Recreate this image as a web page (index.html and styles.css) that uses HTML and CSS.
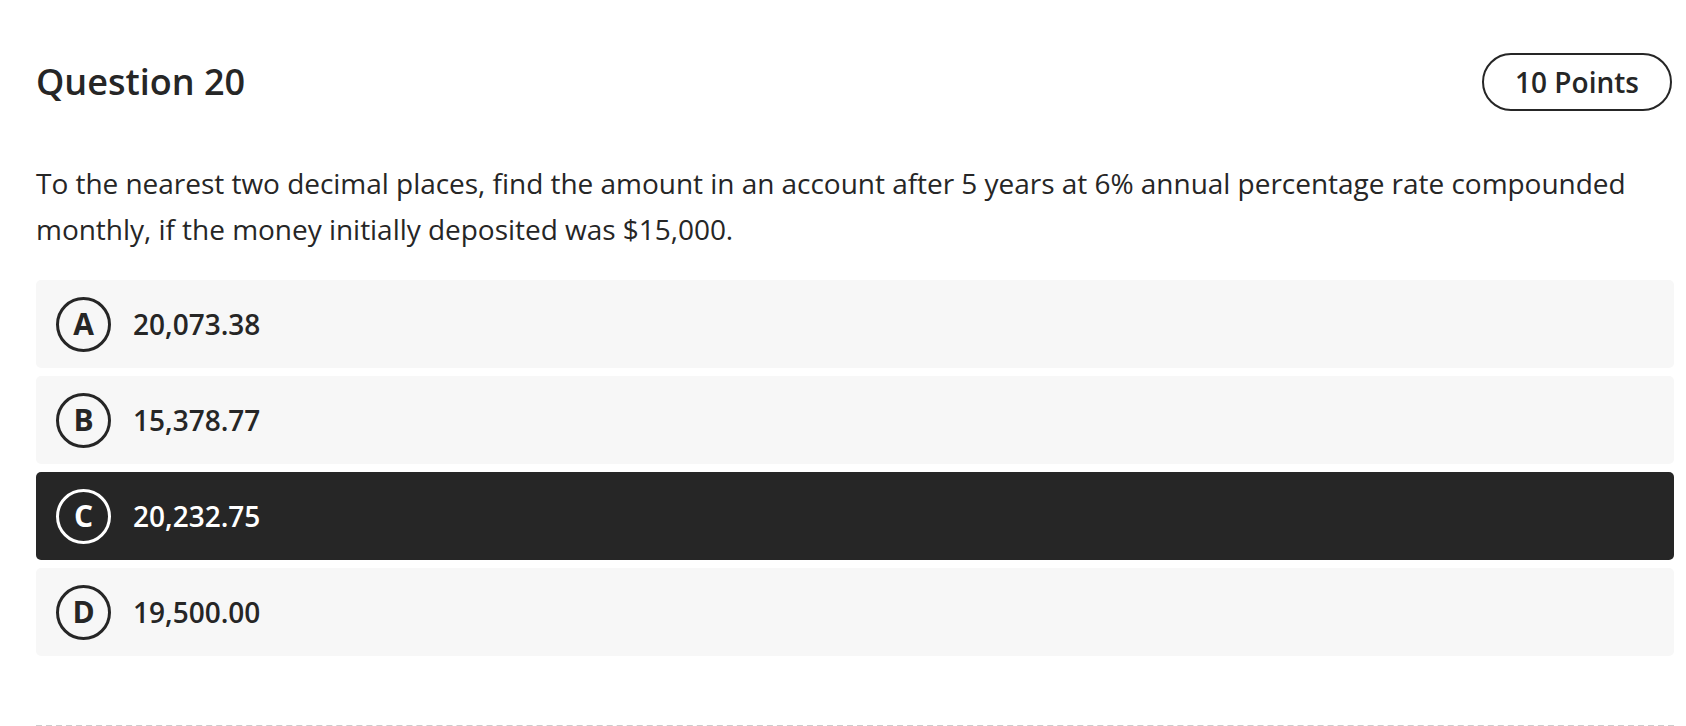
FILE: index.html
```html
<!DOCTYPE html>
<html lang="en">
<head>
<meta charset="utf-8">
<title>Question 20</title>
<link rel="stylesheet" href="styles.css">
</head>
<body>
<main class="question">
  <header class="q-header">
    <h1 class="q-title">Question 20</h1>
    <span class="q-points">10 Points</span>
  </header>
  <p class="q-text">To the nearest two decimal places, find the amount in an account after 5 years at 6% annual percentage rate compounded monthly, if the money initially deposited was $15,000.</p>
  <ul class="options">
    <li class="option"><span class="badge">A</span><span class="opt-text">20,073.38</span></li>
    <li class="option"><span class="badge">B</span><span class="opt-text">15,378.77</span></li>
    <li class="option selected"><span class="badge">C</span><span class="opt-text">20,232.75</span></li>
    <li class="option"><span class="badge">D</span><span class="opt-text">19,500.00</span></li>
  </ul>
  <div class="divider"></div>
</main>
</body>
</html>
```
FILE: styles.css
```css
* { box-sizing: border-box; }
html, body { margin: 0; padding: 0; background: #fff; }
body {
  font-family: "Open Sans", "Noto Sans", sans-serif;
  color: #262626;
  overflow: hidden;
}
.question {
  padding: 53px 12px 0 36px;
}
.q-header {
  display: flex;
  justify-content: space-between;
  align-items: center;
  height: 58px;
}
.q-title {
  margin: 0;
  font-size: 36px;
  font-weight: 600;
  line-height: 42px;
}
.q-points {
  display: flex;
  align-items: center;
  justify-content: center;
  width: 190px;
  height: 58px;
  border: 2px solid #262626;
  border-radius: 29px;
  font-size: 28px;
  font-weight: 600;
  margin-right: 2px;
}
.q-text {
  margin: 49px 0 0;
  font-size: 28px;
  line-height: 46px;
  font-weight: 400;
  letter-spacing: -0.03px;
}
.options {
  list-style: none;
  margin: 28px 0 0;
  padding: 0;
  display: flex;
  flex-direction: column;
  gap: 8px;
}
.option {
  display: flex;
  align-items: center;
  gap: 22px;
  height: 88px;
  padding-left: 20px;
  background: #f7f7f7;
  border-radius: 5px;
}
.option.selected {
  background: #262626;
  color: #fff;
}
.badge {
  display: flex;
  align-items: center;
  justify-content: center;
  width: 55px;
  height: 55px;
  border: 3px solid currentColor;
  border-radius: 50%;
  font-size: 30px;
  font-weight: 700;
  line-height: 1;
}
.opt-text {
  font-size: 28px;
  font-weight: 600;
}
.divider {
  margin-top: 69px;
  border-top: 2px dashed #cccccc;
}
```
